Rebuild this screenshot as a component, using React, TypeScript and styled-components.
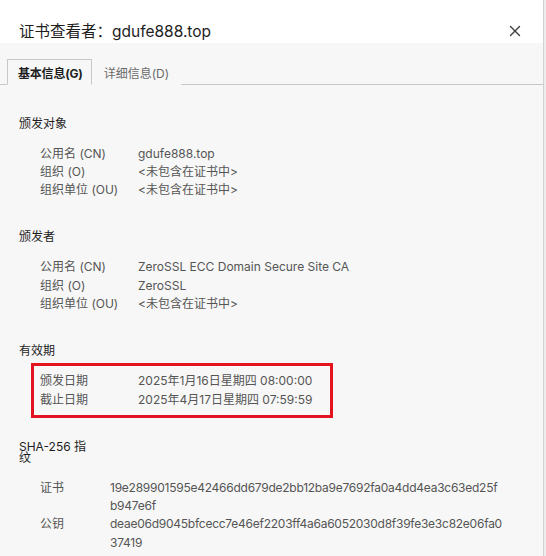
import styled, { createGlobalStyle } from "styled-components";

const GlobalStyle = createGlobalStyle`
  html, body {
    margin: 0;
    padding: 0;
    background: #ededed;
  }
  body {
    font-family: "Inter", "Noto Sans CJK SC", sans-serif;
    -webkit-font-smoothing: antialiased;
  }
`;

type Field = { label: string; value: string };
type HashField = { label: string; lines: string[] };

const subject: Field[] = [
  { label: "公用名 (CN)", value: "gdufe888.top" },
  { label: "组织 (O)", value: "<未包含在证书中>" },
  { label: "组织单位 (OU)", value: "<未包含在证书中>" },
];

const issuer: Field[] = [
  { label: "公用名 (CN)", value: "ZeroSSL ECC Domain Secure Site CA" },
  { label: "组织 (O)", value: "ZeroSSL" },
  { label: "组织单位 (OU)", value: "<未包含在证书中>" },
];

const validity: Field[] = [
  { label: "颁发日期", value: "2025年1月16日星期四 08:00:00" },
  { label: "截止日期", value: "2025年4月17日星期四 07:59:59" },
];

// 지문은 원본 화면과 같은 위치에서 줄바꿈
const fingerprints: HashField[] = [
  {
    label: "证书",
    lines: ["19e289901595e42466dd679de2bb12ba9e7692fa0a4dd4ea3c63ed25f", "b947e6f"],
  },
  {
    label: "公钥",
    lines: ["deae06d9045bfcecc7e46ef2203ff4a6a6052030d8f39fe3e3c82e06fa0", "37419"],
  },
];

export default function App() {
  return (
    <>
      <GlobalStyle />
      <Window>
        <Header>
          <Title>证书查看者：gdufe888.top</Title>
          <CloseButton aria-label="关闭">
            <svg width="12" height="12" viewBox="0 0 12 12">
              <path
                d="M1.5 1.5 L10.5 10.5 M10.5 1.5 L1.5 10.5"
                stroke="#3c3c3c"
                strokeWidth="1.4"
                strokeLinecap="round"
              />
            </svg>
          </CloseButton>
        </Header>

        <Body>
          <TabBar>
            <Tab $active>基本信息(G)</Tab>
            <Tab>详细信息(D)</Tab>
          </TabBar>

          <Content>
            <Section>
              <Heading>颁发对象</Heading>
              <Rows>
                {subject.map((f) => (
                  <Row key={f.label} $labelWidth={98}>
                    <Label>{f.label}</Label>
                    <Value>{f.value}</Value>
                  </Row>
                ))}
              </Rows>
            </Section>

            <Section>
              <Heading>颁发者</Heading>
              <Rows>
                {issuer.map((f) => (
                  <Row key={f.label} $labelWidth={98}>
                    <Label>{f.label}</Label>
                    <Value>{f.value}</Value>
                  </Row>
                ))}
              </Rows>
            </Section>

            <Section>
              <Heading>有效期</Heading>
              <Rows $highlight>
                {validity.map((f) => (
                  <Row key={f.label} $labelWidth={98}>
                    <Label>{f.label}</Label>
                    <Value>{f.value}</Value>
                  </Row>
                ))}
              </Rows>
            </Section>

            <Section>
              <Heading>SHA-256 指纹</Heading>
              <Rows>
                {fingerprints.map((f) => (
                  <Row key={f.label} $labelWidth={70}>
                    <Label>{f.label}</Label>
                    <Hash>
                      {f.lines.map((line) => (
                        <HashLine key={line}>{line}</HashLine>
                      ))}
                    </Hash>
                  </Row>
                ))}
              </Rows>
            </Section>
          </Content>
        </Body>
      </Window>
    </>
  );
}

// --- Styles ---

const Window = styled.div`
  width: 543px;
  height: 556px;
  border-right: 1px solid #d2d2d2;
  display: flex;
  flex-direction: column;
  overflow: hidden;
  background: #f7f7f7;
`;

const Header = styled.div`
  height: 43px;
  box-sizing: border-box;
  flex-shrink: 0;
  background: #ffffff;
  display: flex;
  align-items: flex-end;
  justify-content: space-between;
  padding: 0 22px 1px 19px;
`;

const Title = styled.h1`
  margin: 0;
  font-size: 15.5px;
  line-height: 20px;
  font-weight: 400;
  color: #1e1e1e;
`;

const CloseButton = styled.button`
  border: none;
  background: none;
  padding: 0;
  margin-bottom: 5px;
  width: 12px;
  height: 12px;
  display: flex;
  cursor: pointer;
`;

const Body = styled.div`
  flex: 1;
  padding-top: 15px;
`;

const TabBar = styled.div`
  display: flex;
  align-items: flex-end;
  height: 26px;
  padding-left: 7px;
  border-bottom: 1px solid #c8c8c8;
`;

const Tab = styled.div<{ $active?: boolean }>`
  height: 26px;
  box-sizing: border-box;
  display: flex;
  align-items: center;
  padding: ${(p) => (p.$active ? "0 8px 0 10px" : "0 11px")};
  margin-bottom: -1px;
  font-size: 12px;
  font-weight: ${(p) => (p.$active ? 700 : 400)};
  letter-spacing: ${(p) => (p.$active ? "-0.2px" : "0")};
  color: ${(p) => (p.$active ? "#1e1e1e" : "#6a6a6a")};
  background: #f7f7f7;
  border: 1px solid ${(p) => (p.$active ? "#c8c8c8" : "transparent")};
  border-bottom-color: ${(p) => (p.$active ? "#f7f7f7" : "transparent")};
`;

const Content = styled.div`
  padding: 29px 19px 0;
  display: flex;
  flex-direction: column;
  gap: 28.5px;
`;

const Section = styled.div`
  display: flex;
  flex-direction: column;
  gap: 12.5px;
`;

const Heading = styled.div`
  max-width: 76px;
  font-size: 12px;
  line-height: 11px;
  padding: 3.5px 0;
  color: #1e1e1e;
`;

const Rows = styled.div<{ $highlight?: boolean }>`
  margin-left: 21px;
  display: flex;
  flex-direction: column;
  align-self: flex-start;
  width: ${(p) => (p.$highlight ? "284px" : "auto")};
  outline: ${(p) => (p.$highlight ? "3px solid #e3141f" : "none")};
  outline-offset: 6px;
`;

const Row = styled.div<{ $labelWidth: number }>`
  display: grid;
  grid-template-columns: ${(p) => p.$labelWidth}px 1fr;
  font-size: 12px;
  line-height: 18.3px;
  color: #555555;
`;

const Label = styled.span`
  white-space: nowrap;
`;

const Value = styled.span`
  white-space: nowrap;
`;

const Hash = styled.span`
  display: flex;
  flex-direction: column;
  letter-spacing: -0.25px;
`;

const HashLine = styled.span`
  white-space: nowrap;
`;
